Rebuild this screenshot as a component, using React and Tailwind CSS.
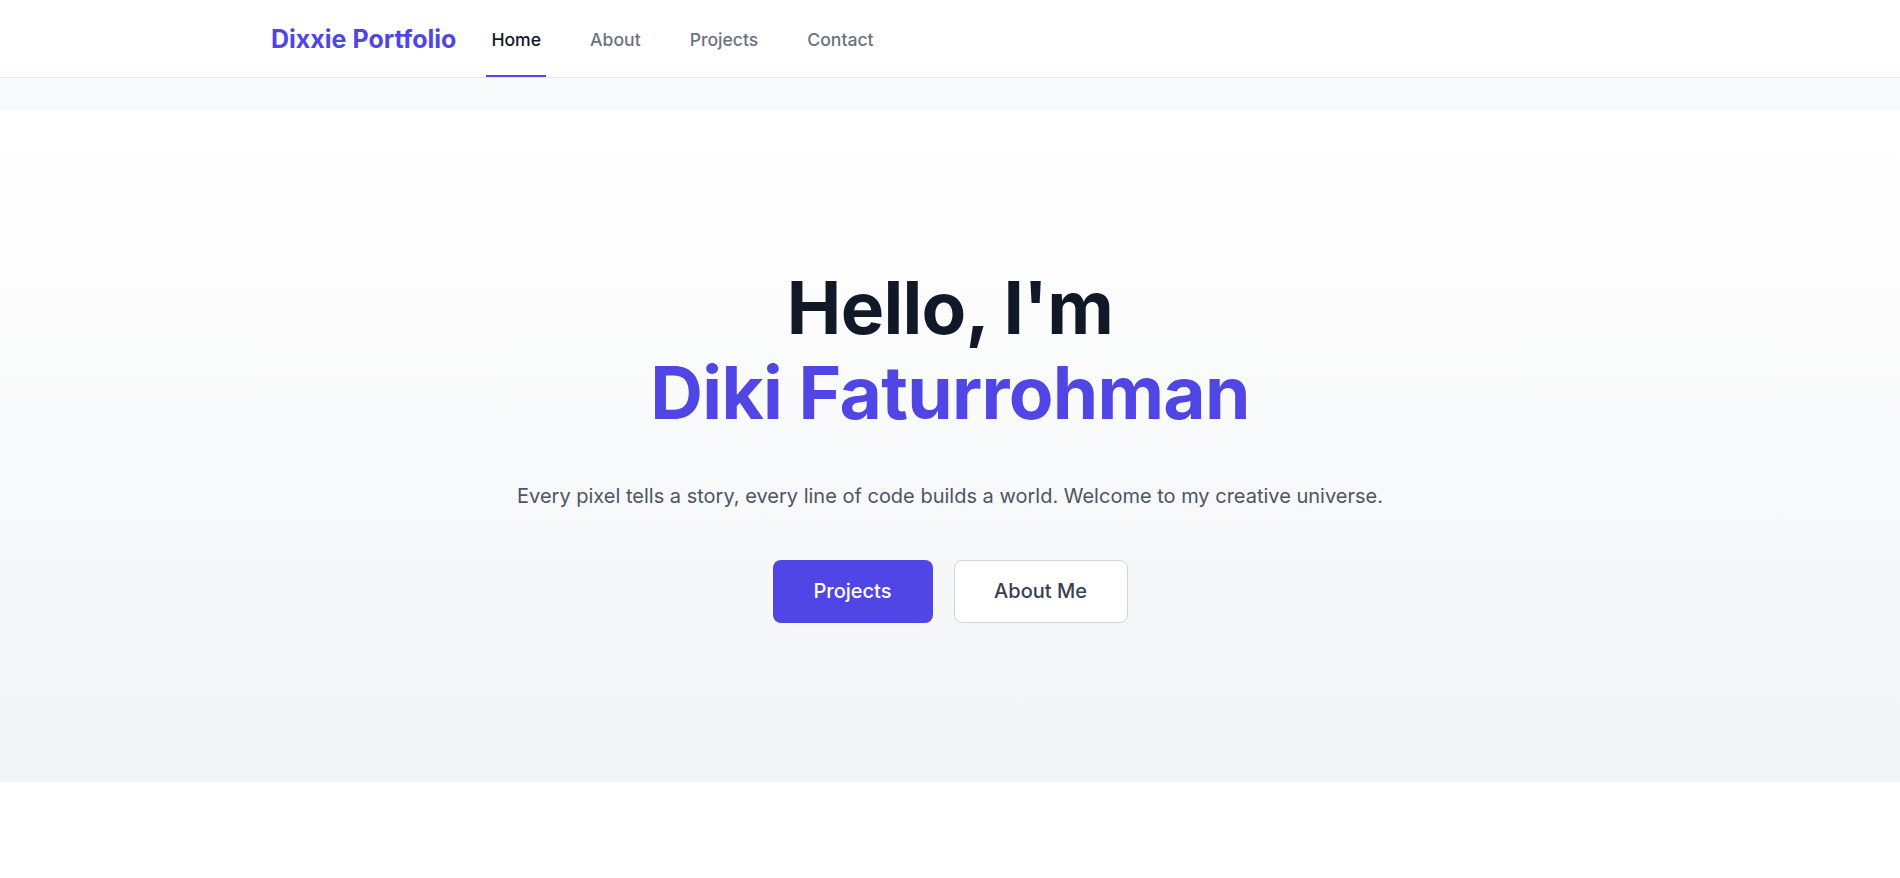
const links = ['Home', 'About', 'Projects', 'Contact'];

const App = () => {
  return (
    <div className="min-h-screen bg-white font-['Inter',sans-serif]">
      <nav className="bg-white border-b border-[#e5e7eb]">
        <div className="max-w-[1396px] mx-auto px-[19px] h-[77px] flex items-stretch">
          <a href="#" className="flex items-center pt-[3px] text-[25px] font-bold text-[#4f46e5]">
            Dixxie Portfolio
          </a>
          <div className="ml-[30px] flex items-stretch gap-[39px]">
            {links.map((link, i) => (
              <a
                key={link}
                href="#"
                className={`flex items-center px-[5px] pt-[5px] text-[17.6px] font-medium border-b-[2px] ${
                  i === 0 ? 'border-[#4f46e5] text-[#111827]' : 'border-transparent text-[#6b7280]'
                }`}
              >
                {link}
              </a>
            ))}
          </div>
        </div>
      </nav>

      <div className="bg-[#f9fafb] pt-[32px]">
        <section className="h-[672px] pb-[5px] bg-gradient-to-b from-white to-[#f3f4f6] flex flex-col items-center justify-center text-center">
          <h1 className="text-[73px] leading-[85px] font-bold text-[#111827] tracking-[-0.01em]">
            Hello, I'm
            <span className="block text-[#4f46e5]">Diki Faturrohman</span>
          </h1>
          <p className="mt-[45px] text-[20px] leading-[32px] text-[#4b5563]">
            Every pixel tells a story, every line of code builds a world. Welcome to my creative universe.
          </p>
          <div className="mt-[48px] flex gap-[21px]">
            <button className="w-[160px] h-[63px] rounded-[8px] bg-[#4f46e5] text-white text-[20px] font-medium">
              Projects
            </button>
            <button className="w-[174px] h-[63px] rounded-[8px] bg-white border border-[#d1d5db] text-[#374151] text-[20px] font-medium">
              About Me
            </button>
          </div>
        </section>
      </div>
    </div>
  );
};

export default App;
